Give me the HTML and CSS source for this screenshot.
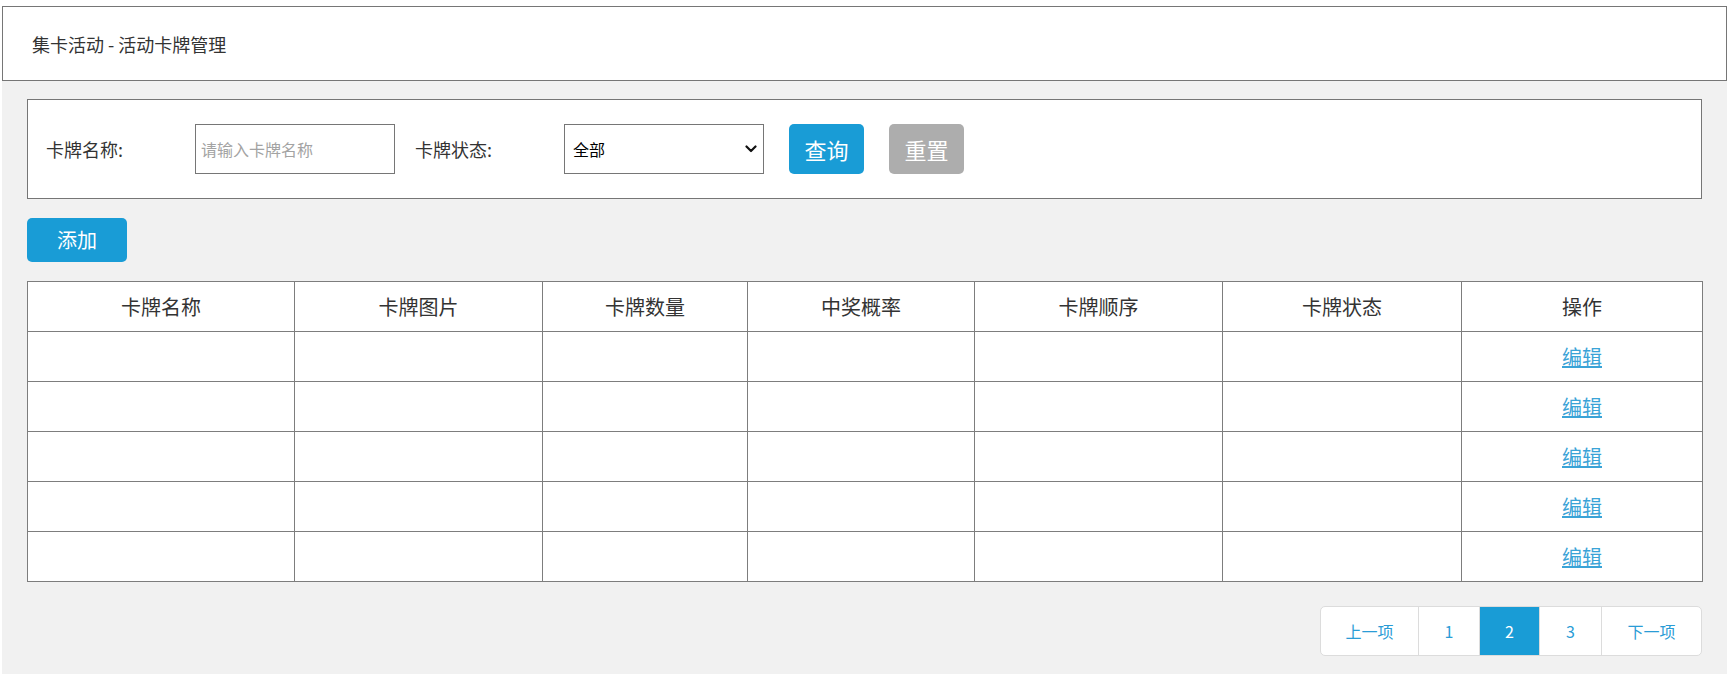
FILE: index.html
```html
<!DOCTYPE html>
<html lang="zh-CN">
<head>
<meta charset="utf-8">
<title>活动卡牌管理</title>
<link rel="stylesheet" href="styles.css">
</head>
<body>
<div class="page">
  <div class="topbar">集卡活动 - 活动卡牌管理</div>
  <div class="main">
    <div class="search">
      <label class="field-label">卡牌名称:</label>
      <input class="input" type="text" placeholder="请输入卡牌名称">
      <label class="field-label second">卡牌状态:</label>
      <div class="select-wrap">
        <select class="select">
          <option>全部</option>
        </select>
        <svg class="chev" width="12" height="8" viewBox="0 0 12 8"><path d="M1.5 1.5 L6 6 L10.5 1.5" fill="none" stroke="#111" stroke-width="2.2" stroke-linecap="round" stroke-linejoin="round"/></svg>
      </div>
      <button class="btn btn-query">查询</button>
      <button class="btn btn-reset">重置</button>
    </div>
    <div class="toolbar">
      <button class="btn btn-add">添加</button>
    </div>
    <table class="grid">
      <colgroup>
        <col class="c1"><col class="c2"><col class="c3"><col class="c4"><col class="c5"><col class="c6"><col class="c7">
      </colgroup>
      <thead>
        <tr><th>卡牌名称</th><th>卡牌图片</th><th>卡牌数量</th><th>中奖概率</th><th>卡牌顺序</th><th>卡牌状态</th><th>操作</th></tr>
      </thead>
      <tbody>
        <tr><td></td><td></td><td></td><td></td><td></td><td></td><td><a href="#" class="link">编辑</a></td></tr>
        <tr><td></td><td></td><td></td><td></td><td></td><td></td><td><a href="#" class="link">编辑</a></td></tr>
        <tr><td></td><td></td><td></td><td></td><td></td><td></td><td><a href="#" class="link">编辑</a></td></tr>
        <tr><td></td><td></td><td></td><td></td><td></td><td></td><td><a href="#" class="link">编辑</a></td></tr>
        <tr><td></td><td></td><td></td><td></td><td></td><td></td><td><a href="#" class="link">编辑</a></td></tr>
      </tbody>
    </table>
    <div class="pager-row">
      <ul class="pager">
        <li class="pg wide">上一项</li>
        <li class="pg n1">1</li>
        <li class="pg n2 active">2</li>
        <li class="pg n3">3</li>
        <li class="pg wide last">下一项</li>
      </ul>
    </div>
  </div>
</div>
</body>
</html>
```
FILE: styles.css
```css
html, body {
  margin: 0;
  background: #fff;
}
body {
  font-family: "Noto Sans CJK SC", "Microsoft YaHei", "Liberation Sans", sans-serif;
  color: #333;
}
.page {
  padding: 6px 3px 0 2px;
}
.topbar {
  box-sizing: border-box;
  height: 75px;
  border: 1px solid #767676;
  display: flex;
  align-items: center;
  padding-left: 29px;
  font-size: 18px;
  line-height: 1;
  color: #333;
  background: #fff;
}
.main {
  box-sizing: border-box;
  height: 593px;
  background: #f1f1f1;
  padding: 18px 25px 0 25px;
}
.search {
  box-sizing: border-box;
  height: 100px;
  background: #fff;
  border: 1px solid #767676;
  display: flex;
  align-items: center;
  padding-left: 18px;
}
.field-label {
  width: 149px;
  font-size: 18px;
  line-height: 1;
  color: #333;
}
.field-label.second {
  margin-left: 20px;
}
.input {
  box-sizing: border-box;
  width: 200px;
  height: 50px;
  border: 1px solid #767676;
  border-radius: 0;
  padding: 0 5px;
  font-family: inherit;
  font-size: 16px;
  outline: none;
  margin: 0;
}
.input::placeholder {
  color: #a3a3a3;
}
.select-wrap {
  position: relative;
  width: 200px;
  height: 50px;
}
.select {
  box-sizing: border-box;
  width: 200px;
  height: 50px;
  border: 1px solid #767676;
  border-radius: 0;
  background: #fff;
  -webkit-appearance: none;
  appearance: none;
  padding: 0 8px;
  font-family: inherit;
  font-size: 16px;
  color: #000;
  margin: 0;
}
.chev {
  position: absolute;
  right: 7px;
  top: 21px;
}
.btn {
  box-sizing: border-box;
  border: 0;
  border-radius: 5px;
  color: #fff;
  font-family: inherit;
  padding: 0;
  margin: 0;
  cursor: pointer;
  line-height: 1;
}
.btn-query {
  width: 75px;
  height: 50px;
  margin-left: 25px;
  background: #199cd6;
  font-size: 22px;
}
.btn-reset {
  width: 75px;
  height: 50px;
  margin-left: 25px;
  background: #adadad;
  font-size: 22px;
}
.toolbar {
  margin-top: 19px;
  display: flex;
}
.btn-add {
  width: 100px;
  height: 44px;
  background: #199cd6;
  font-size: 20px;
}
.grid {
  margin-top: 19px;
  width: 1675px;
  border-collapse: collapse;
  table-layout: fixed;
  background: #fff;
}
.grid .c1 { width: 267px; }
.grid .c2 { width: 248px; }
.grid .c3 { width: 205px; }
.grid .c4 { width: 227px; }
.grid .c5 { width: 248px; }
.grid .c6 { width: 239px; }
.grid .c7 { width: 241px; }
.grid th, .grid td {
  border: 1px solid #7d7d7d;
  height: 50px;
  box-sizing: border-box;
  padding: 0;
  text-align: center;
  vertical-align: middle;
  font-size: 20px;
  font-weight: normal;
  line-height: 1;
  color: #333;
}
.link {
  color: #3aa3d7;
  text-decoration: underline;
  font-size: 20px;
}
.pager-row {
  margin-top: 24px;
  display: flex;
  justify-content: flex-end;
}
.pager {
  list-style: none;
  margin: 0;
  padding: 0;
  display: flex;
  height: 50px;
  box-sizing: border-box;
  border: 1px solid #dcdcdc;
  border-radius: 5px;
  overflow: hidden;
  background: #fff;
}
.pg {
  display: flex;
  align-items: center;
  justify-content: center;
  border-right: 1px solid #dcdcdc;
  font-size: 16px;
  color: #2a9cd6;
  line-height: 1;
}
.pg.wide { width: 97px; }
.pg.last { width: 99px; border-right: 0; }
.pg.n1 { width: 60px; }
.pg.n2 { width: 59px; }
.pg.n3 { width: 61px; }
.pg.active {
  background: #199cd6;
  color: #fff;
}
```
